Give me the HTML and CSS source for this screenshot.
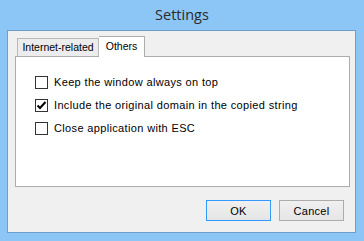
FILE: index.html
```html
<!DOCTYPE html>
<html>

<head>

	<title>Settings</title>

	<link rel="stylesheet" href="styles.css">
</head>

<body>

	<div class="titlebar">Settings</div>

	<div class="client">

		<div class="tabs">
			<div class="tab first">Internet-related</div>
			<div class="tab selected">Others</div>
		</div>

		<div class="panel">
			<label class="option">
				<span class="box"></span>
				Keep the window always on top
			</label>
			<label class="option">
				<span class="box">
					<svg width="11" height="11" viewBox="0 0 11 11"><path d="M1.5 5.5 L4 8 L9.5 2" fill="none" stroke="#000" stroke-width="2"/></svg>
				</span>
				Include the original domain in the copied string
			</label>
			<label class="option">
				<span class="box"></span>
				Close application with ESC
			</label>
		</div>

		<div class="buttons">
			<button class="btn default">OK</button>
			<button class="btn">Cancel</button>
		</div>

	</div>

</body>

</html>
```

FILE: styles.css
```css
html, body {
	margin: 0;
	width: 364px;
	height: 241px;
	background: #8cc6f7;
	font-family: 'Liberation Sans', Arial, sans-serif;
	font-size: 11px;
	color: #000;
	overflow: hidden;
}

.titlebar {
	height: 30px;
	line-height: 30px;
	text-align: center;
	font-family: 'Open Sans', sans-serif;
	font-size: 14.5px;
	color: #2b2b2b;
}

.client {
	margin: 0 8px 0 7px;
	height: 203px;
	border: 1px solid #6d9ec9;
	background: #f0f0f0;
	padding-top: 5px;
	box-sizing: border-box;
}

/* tab strip */
.tabs {
	display: flex;
	align-items: flex-end;
	height: 20px;
	padding-left: 9px;
	position: relative;
	z-index: 1;
}

.tab {
	height: 18px;
	line-height: 17px;
	text-align: center;
	font-size: 10.5px;
	border: 1px solid #b9b9b9;
	border-bottom: none;
	background: #ececec;
	box-sizing: border-box;
	color: #000;
}

.tab.first {
	width: 82px;
}

.tab.selected {
	width: 46px;
	height: 21px;
	margin-bottom: -1px;
	line-height: 19px;
	background: #fff;
	border-color: #adadad;
	border-left: none;
}

.panel {
	margin: 0 5px 0 7px;
	height: 131px;
	border: 1px solid #adadad;
	background: #fff;
	box-sizing: border-box;
	padding: 19px 0 0 19px;
	display: flex;
	flex-direction: column;
	gap: 10px;
}

.option {
	display: flex;
	align-items: center;
	gap: 6px;
	height: 13px;
	line-height: 13px;
	letter-spacing: 0.35px;
}

.box {
	width: 13px;
	height: 13px;
	border: 1px solid #333;
	box-sizing: border-box;
	background: #fff;
	display: flex;
	align-items: center;
	justify-content: center;
}

.box svg {
	display: block;
}

/* OK / Cancel */
.buttons {
	display: flex;
	justify-content: flex-end;
	gap: 8px;
	padding: 13px 11px 0 0;
}

.btn {
	width: 65px;
	height: 21px;
	padding: 0;
	margin: 0;
	font-family: 'Liberation Sans', Arial, sans-serif;
	font-size: 11px;
	letter-spacing: 0.3px;
	color: #000;
	background: linear-gradient(#f0f0f0, #e5e5e5);
	border: 1px solid #acacac;
}

.btn.default {
	border-color: #3399ff;
}
```
